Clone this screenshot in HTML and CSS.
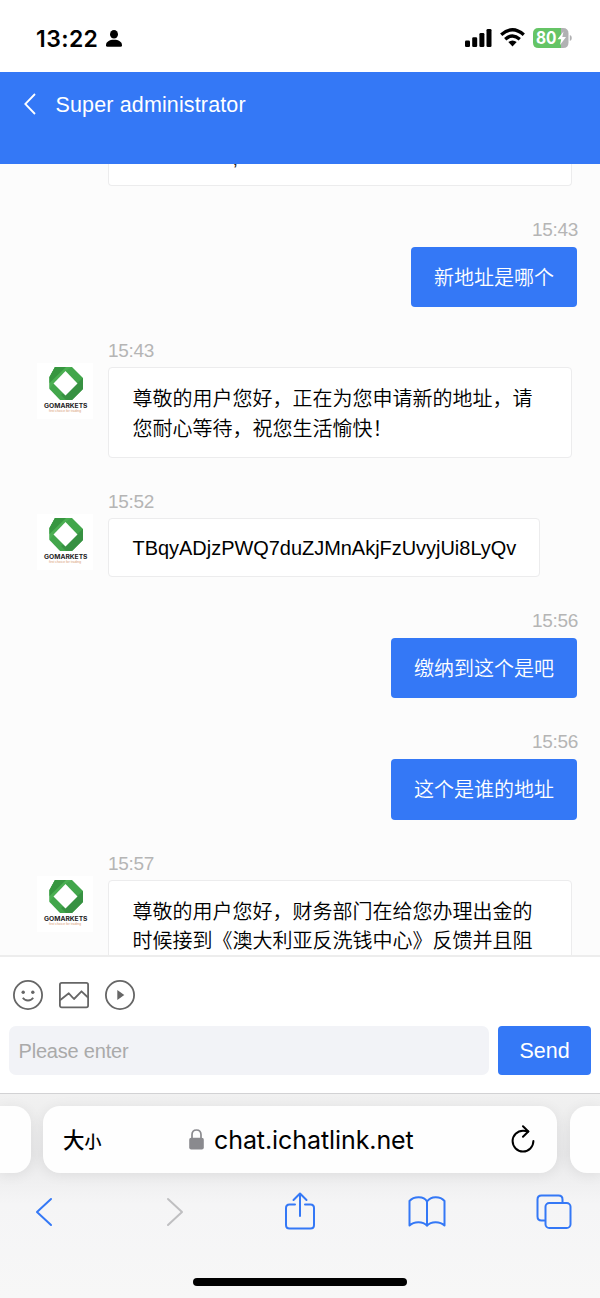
FILE: index.html
```html
<!DOCTYPE html>
<html lang="en">
<head>
<meta charset="utf-8">
<title>Super administrator</title>
<link rel="stylesheet" href="styles.css">
</head>
<body>
<svg width="0" height="0" class="defs">
  <symbol id="logo" viewBox="0 0 56 56">
    <path d="M18 4H35L46 15V26L35 37H23L12.500 26V14Z" fill="#42a64b"/>
    <path d="M18 4H35L28 8L17 20L12.500 26V14Z" fill="#4baf52"/>
    <path d="M18 4H29L12.500 20V14Z" fill="#379640"/>
    <path d="M46 15V26L35 37H29L24 32L40.500 20Z" fill="#379142"/>
    <path d="M28.500 8L40.500 20.500L28.500 32.500L16.500 20.500Z" fill="#fff"/>
    <text class="logo-name" x="7" y="45" textLength="43.500" lengthAdjust="spacingAndGlyphs">GOMARKETS</text>
    <text class="logo-tag" x="12" y="49.400" textLength="32" lengthAdjust="spacingAndGlyphs">first choice for trading</text>
  </symbol>
</svg>
<div class="phone">
  <div class="status">
    <span class="clock">13:22</span>
    <svg class="person" width="16" height="17" viewBox="0 0 16 17"><ellipse cx="8" cy="4.300" rx="4" ry="4.300"/><path d="M0 15.200C0 11.800 3.500 9.800 8 9.800S16 11.800 16 15.200Q16 16.800 14.500 16.800H1.500Q0 16.800 0 15.200Z"/></svg>
    <svg class="signal" width="27" height="18" viewBox="0 0 27 18"><rect x="0" y="11.500" width="5" height="6.500" rx="1.300"/><rect x="7.200" y="8.300" width="5" height="9.700" rx="1.300"/><rect x="14.400" y="4" width="5" height="14" rx="1.300"/><rect x="21.500" y="0" width="5" height="18" rx="1.300"/></svg>
    <svg class="wifi" width="25" height="19" viewBox="0 0 25 19"><g fill="none" stroke="#000" stroke-width="3.300"><path d="M1.200 6.800Q12.500-3.300 23.800 6.800"/><path d="M5.200 11.200Q12.500 4.800 19.800 11.200"/></g><path d="M8.300 14Q12.500 10.800 16.700 14L12.500 18.600Z"/></svg>
    <svg class="battery" width="40" height="20" viewBox="0 0 40 20"><path d="M28 0H30Q35.500 0 35.500 5.500V14.500Q35.500 20 30 20H28Z" fill="#b1b1b3"/><path d="M28 0H5.500Q0 0 0 5.500V14.500Q0 20 5.500 20H28Z" fill="#65c466"/><path d="M36.800 7Q38.800 7.500 38.800 10T36.800 13Z" fill="#b1b1b3"/><text class="battery-text" x="3" y="15.800" textLength="20.500" lengthAdjust="spacingAndGlyphs">80</text><path d="M30.500 3.500L24.500 11.200H28.200L27 17L33 9H29.300Z" fill="#fff"/></svg>
  </div>
  <header class="header">
    <svg width="12" height="22" viewBox="0 0 12 22"><path d="M11 1L1.300 11L11 21" fill="none" stroke="#fff" stroke-width="1.800"/></svg>
    <span class="title">Super administrator</span>
  </header>
  <main class="chat">
    <div class="msg previous"><div class="bubble wide"><span class="cut-text">,</span></div></div>
    <div class="msg mine"><time>15:43</time><div class="bubble">新地址是哪个</div></div>
    <div class="msg theirs"><svg class="avatar"><use href="#logo"/></svg><div class="body"><time>15:43</time><div class="bubble wide">尊敬的用户您好，正在为您申请新的地址，请<br>您耐心等待，祝您生活愉快！</div></div></div>
    <div class="msg theirs"><svg class="avatar"><use href="#logo"/></svg><div class="body"><time>15:52</time><div class="bubble code">TBqyADjzPWQ7duZJMnAkjFzUvyjUi8LyQv</div></div></div>
    <div class="msg mine"><time>15:56</time><div class="bubble">缴纳到这个是吧</div></div>
    <div class="msg mine"><time>15:56</time><div class="bubble">这个是谁的地址</div></div>
    <div class="msg theirs"><svg class="avatar"><use href="#logo"/></svg><div class="body"><time>15:57</time><div class="bubble wide">尊敬的用户您好，财务部门在给您办理出金的<br>时候接到《澳大利亚反洗钱中心》反馈并且阻</div></div></div>
  </main>
  <section class="composer">
    <div class="tools">
      <svg width="30" height="30" viewBox="0 0 30 30"><circle cx="15" cy="15" r="14.100"/><circle class="solid" cx="10.200" cy="12.200" r="1.700"/><circle class="solid" cx="19.800" cy="12.200" r="1.700"/><path d="M9.800 17.800Q11.500 20.500 15 20.500T20.200 17.800"/></svg>
      <svg width="30" height="30" viewBox="0 0 30 30"><rect x=".9" y="2.900" width="28.200" height="24.400" rx="1.800"/><path d="M1 20.300L9.800 13.300L15 19L22.500 11.300L29 17.500"/></svg>
      <svg width="30" height="30" viewBox="0 0 30 30"><circle cx="15" cy="15" r="14.100"/><path class="solid" d="M12.300 10L19.300 15L12.300 20Z"/></svg>
    </div>
    <div class="entry"><div class="input">Please enter</div><div class="send">Send</div></div>
  </section>
  <footer class="browser">
    <div class="tabs">
      <div class="tab side-left"></div>
      <div class="tab address">
        <span class="size"><span class="size-big">大</span><span class="size-small">小</span></span>
        <svg class="lock" width="15" height="21" viewBox="0 0 15 21"><path d="M3 10V5.800Q3 1 7.500 1T12 5.800V10" fill="none" stroke="#8a8a8e" stroke-width="1.700"/><rect x=".2" y="8.700" width="14.600" height="11.700" rx="2" fill="#8a8a8e"/></svg>
        <span class="url">chat.ichatlink.net</span>
        <svg class="reload" width="24" height="29" viewBox="0 0 24 29"><g fill="none" stroke="#000" stroke-width="2" stroke-linecap="round" stroke-linejoin="round"><path d="M17.300 6.500Q14.500 5.700 12 5.700A10.400 10.400 0 1 0 22.400 16.100"/><path d="M12 1.200L17.300 6.500L12 11.800"/></g></svg>
      </div>
      <div class="tab side-right"></div>
    </div>
    <nav class="nav">
      <svg class="back" width="18" height="30" viewBox="0 0 18 30"><path d="M16 2L2 15L16 28"/></svg>
      <svg class="forward" width="18" height="30" viewBox="0 0 18 30"><path d="M2 2L16 15L2 28"/></svg>
      <svg class="share" width="30" height="38" viewBox="0 0 30 38"><path d="M10 12.500H4.500Q1 12.500 1 16V33Q1 36.500 4.500 36.500H25.500Q29 36.500 29 33V16Q29 12.500 25.500 12.500H20M15 24V2M8.500 8L15 1.500L21.500 8"/></svg>
      <svg class="book" width="38" height="32" viewBox="0 0 38 32"><path d="M19 5.500C16 0 6 0 1.500 5V29.500C6 25 15 25 19 29.700V5.500C23 0 32 0 36.500 5V29.500C32 25 23 25 19 29.700"/></svg>
      <svg class="pages" width="36" height="35" viewBox="0 0 36 35"><path d="M8.500 26.500H5.500Q1.500 26.500 1.500 22.500V5.500Q1.500 1.500 5.500 1.500H22.500Q26.500 1.500 26.500 5.500V8.500"/><rect x="9.500" y="9" width="25" height="25" rx="3.800"/></svg>
    </nav>
    <div class="home"></div>
  </footer>
</div>
</body>
</html>
```
FILE: styles.css
```css
* { box-sizing: border-box; }
body { margin: 0; font-family: "Liberation Sans", "Noto Sans CJK SC", sans-serif; }
svg { display: block; flex: none; }
.defs { position: absolute; }
.phone { width: 600px; height: 1298px; display: flex; flex-direction: column; overflow: hidden; background: #fff; }

.status { height: 72px; flex: none; display: flex; align-items: flex-start; padding: 28px 28px 0 36px; }
.clock { width: 63px; font: 600 23px/22px Inter, sans-serif; letter-spacing: .4px; white-space: nowrap; }
.person { margin: 2px 0 0 7px; }
.signal { margin: 1px 8px 0 auto; }
.wifi { margin-right: 8px; }
.battery { margin-right: -1px; }
.battery-text { font: 700 17px Inter, sans-serif; fill: #fff; }

.header { height: 92px; flex: none; display: flex; align-items: flex-start; gap: 20px; padding: 21px 23.500px; background: #3478f6; color: #fff; }
.title { font-size: 21.500px; line-height: 24px; letter-spacing: .14px; }

.chat { height: 791px; flex: none; overflow: hidden; background: #fcfcfc; font-size: 20px; font-weight: 350; line-height: 29.300px; }
.previous { padding-left: 107.500px; }
.previous .bubble { height: 22px; min-height: 0; padding: 0; border-top: 0; border-radius: 0 0 4px 4px; line-height: 0; position: relative; }
.cut-text { position: absolute; left: 124px; top: -6px; color: #222; }
.msg time { display: block; height: 24px; font-size: 19px; line-height: 15px; letter-spacing: -.3px; color: #b5b5b5; }
.bubble { background: #fff; border: 1px solid #ececed; border-radius: 4px; padding: 17px 23px 0 24px; white-space: nowrap; }
.wide { width: 464.500px; min-height: 91px; }
.mine { display: flex; flex-direction: column; align-items: flex-end; padding: 37px 22px 0 0; }
.mine time { line-height: 14px; }
.mine .bubble { margin-right: 1px; height: 60.250px; padding: 16.500px 23px 0; border: 0; background: #3478f6; color: #fff; }
.theirs { display: flex; gap: 15px; height: 151px; padding: 36px 0 0 37px; }
.theirs:has(.code) { height: 118.750px; }
.avatar { width: 56px; height: 56px; margin-top: 20px; background: #fff; }
.body { display: flex; flex-direction: column; align-items: flex-start; margin-left: -.500px; }
.body time { padding-left: .500px; }
.code { height: 58.750px; width: 432.500px; font-size: 19.950px; padding-top: 15px; }
.logo-name { font: 700 6px Inter, sans-serif; fill: #222; }
.logo-tag { font: 3.200px "Liberation Sans", sans-serif; fill: #d99a72; }

.composer { height: 138px; flex: none; background: #fff; border-top: 2px solid #ededed; padding: 23px 9px 0; }
.tools { display: flex; gap: 16px; padding-left: 4px; fill: none; stroke: #666; stroke-width: 1.800px; stroke-linejoin: round; }
.solid { fill: #666; stroke: none; }
.entry { display: flex; gap: 9px; margin-top: 15.500px; }
.input { width: 480px; height: 49.500px; border-radius: 7px; background: #f2f3f7; color: #aaa; padding-left: 9.500px; font-size: 20px; line-height: 51px; letter-spacing: -.2px; }
.send { width: 93px; height: 49.500px; border-radius: 4px; background: #3478f6; color: #fff; text-align: center; font-size: 21.500px; line-height: 50px; }

.browser { height: 205px; flex: none; border-top: 1px solid #d2d2d4; background: linear-gradient(#f1f1f1 0, #e9e9ea 60px, #f5f5f6 110px, #f7f7f7 205px); }
.tabs { display: flex; gap: 12.500px; padding-top: 12px; }
.tab { height: 67px; background: #fefefe; border-radius: 17px; box-shadow: 0 2px 14px rgba(0, 0, 0, .07); }
.side-left { width: 30.500px; border-radius: 0 17px 17px 0; }
.side-right { width: 30.500px; border-radius: 17px 0 0 17px; }
.address { width: 514px; display: flex; align-items: center; padding: 0 22px 0 20px; }
.size { display: flex; align-items: baseline; width: 126px; margin-top: -3px; font-family: "Noto Sans CJK SC", sans-serif; font-weight: 500; }
.size-big { font-size: 21.500px; }
.size-small { font-size: 17px; }
.lock { margin-right: 10px; }
.url { font: 25px/30px Inter, sans-serif; letter-spacing: -.08px; white-space: nowrap; }
.reload { margin-left: auto; }
.nav { height: 77px; display: flex; align-items: center; padding-left: 35px; fill: none; stroke: #3478f6; stroke-width: 2px; stroke-linecap: round; stroke-linejoin: round; }
.forward { margin-left: 113px; stroke: #bfbfc1; }
.share { margin: -2px 0 0 101px; }
.book { margin-left: 93px; }
.pages { margin-left: 90px; }
.home { width: 214px; height: 8px; margin: 28px auto 0; border-radius: 4px; background: #000; }
```
